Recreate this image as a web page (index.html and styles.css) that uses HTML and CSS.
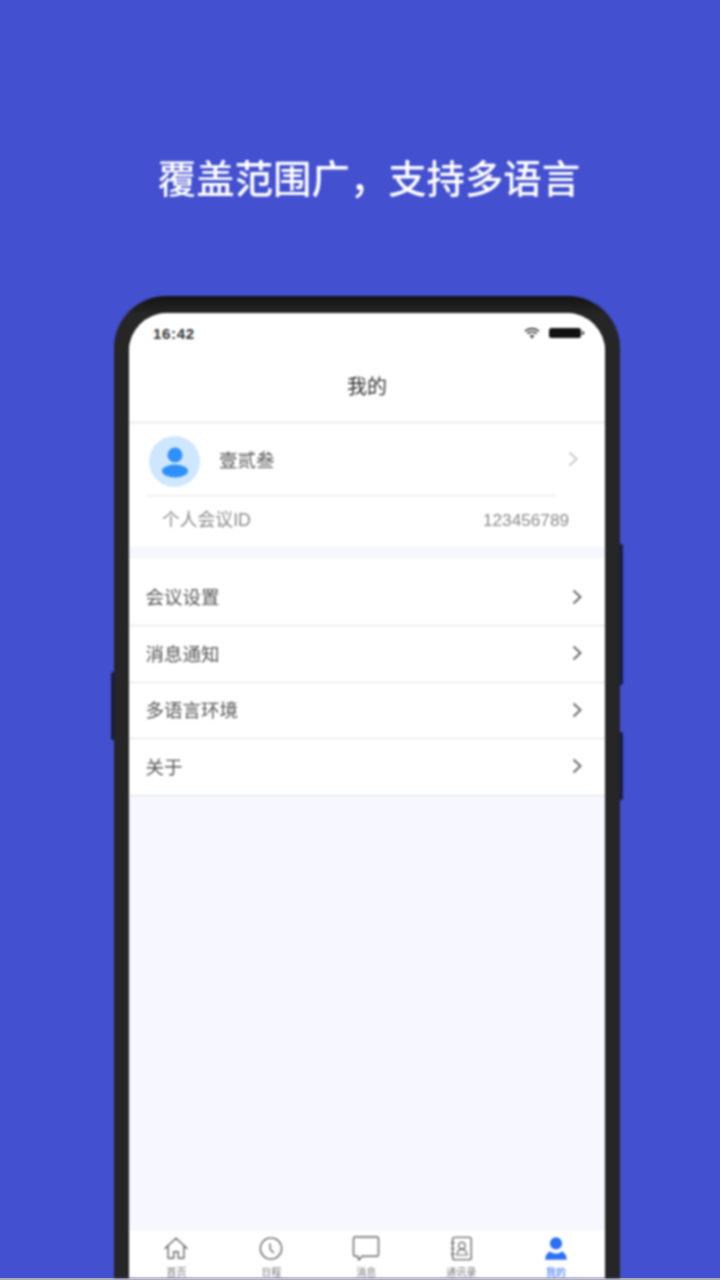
FILE: index.html
```html
<!DOCTYPE html>
<html lang="zh-CN">
<head>
<meta charset="utf-8">
<title>覆盖范围广，支持多语言</title>
<link rel="stylesheet" href="styles.css">
</head>
<body>
<main class="poster">
  <header class="hero"><h1>覆盖范围广，支持多语言</h1></header>
  <div class="phone">
    <span class="btn btn-left"></span>
    <span class="btn btn-right-1"></span>
    <span class="btn btn-right-2"></span>
    <div class="screen">
      <div class="status">
        <span class="time">16:42</span>
        <span class="status-icons">
          <svg class="wifi" viewBox="0 0 16 12" width="16" height="12"><path d="M1 4.200C5 .6 11 .6 15 4.200" fill="none" stroke="#222" stroke-width="1.500"/><path d="M3.400 6.600c2.700-2.300 6.500-2.300 9.200 0" fill="none" stroke="#222" stroke-width="1.500"/><path d="M5.800 8.800c1.300-1 3.100-1 4.400 0L8 11.500z" fill="#222"/></svg>
          <svg class="battery" viewBox="0 0 36 12" width="36" height="12"><rect x="0" y="1" width="32" height="10" rx="2.500" fill="#111"/><rect x="33" y="4" width="2" height="4" rx="1" fill="#333"/></svg>
        </span>
      </div>
      <div class="navbar">我的</div>
      <section class="profile">
        <div class="profile-row">
          <span class="avatar">
            <svg viewBox="0 0 28 32" width="28" height="32"><circle cx="14" cy="9" r="7.500" fill="#2e90fa"/><ellipse cx="14" cy="25" rx="13" ry="6.500" fill="#2e90fa"/></svg>
          </span>
          <span class="name">壹贰叁</span>
          <svg class="chev chev-light" viewBox="0 0 10 16" width="10" height="16"><path d="M1.500 1.500 8.500 8l-7 6.500" fill="none" stroke="#bcbcbc" stroke-width="1.700"/></svg>
        </div>
        <div class="meeting-row">
          <span>个人会议ID</span>
          <span class="meeting-id">123456789</span>
        </div>
      </section>
      <ul class="menu">
        <li class="menu-item first"><span>会议设置</span><svg class="chev" viewBox="0 0 10 16" width="10" height="16"><path d="M1.500 1.500 8.500 8l-7 6.500" fill="none" stroke="#666" stroke-width="1.900"/></svg></li>
        <li class="menu-item"><span>消息通知</span><svg class="chev" viewBox="0 0 10 16" width="10" height="16"><path d="M1.500 1.500 8.500 8l-7 6.500" fill="none" stroke="#666" stroke-width="1.900"/></svg></li>
        <li class="menu-item"><span>多语言环境</span><svg class="chev" viewBox="0 0 10 16" width="10" height="16"><path d="M1.500 1.500 8.500 8l-7 6.500" fill="none" stroke="#666" stroke-width="1.900"/></svg></li>
        <li class="menu-item"><span>关于</span><svg class="chev" viewBox="0 0 10 16" width="10" height="16"><path d="M1.500 1.500 8.500 8l-7 6.500" fill="none" stroke="#666" stroke-width="1.900"/></svg></li>
      </ul>
      <div class="spacer"></div>
      <nav class="tabs">
        <div class="tab">
          <svg viewBox="0 0 28 26" width="26" height="25"><path d="M2 13 14 2l12 11M5.500 11v12.500h6v-7h5v7h6V11" fill="none" stroke="#666" stroke-width="1.500" stroke-linejoin="round" stroke-linecap="round"/></svg>
          <span>首页</span>
        </div>
        <div class="tab">
          <svg viewBox="0 0 28 26" width="26" height="25"><circle cx="14" cy="13" r="11.500" fill="none" stroke="#666" stroke-width="1.500"/><path d="M13 7.500v6l4 4.500" fill="none" stroke="#666" stroke-width="1.500"/></svg>
          <span>日程</span>
        </div>
        <div class="tab">
          <svg viewBox="0 0 28 26" width="28" height="25"><path d="M2.500 1h23A1.500 1.500 0 0 1 27 2.500v17a1.500 1.500 0 0 1-1.500 1.500H10l-3.500 4-1-4h-3A1.500 1.500 0 0 1 1 19.500v-17A1.500 1.500 0 0 1 2.500 1z" fill="none" stroke="#666" stroke-width="1.500" stroke-linejoin="round"/></svg>
          <span>消息</span>
        </div>
        <div class="tab">
          <svg viewBox="0 0 28 26" width="26" height="25"><rect x="5" y="1" width="20" height="24" rx="2" fill="none" stroke="#666" stroke-width="1.500"/><path d="M3 7h4M3 13h4M3 19h4" stroke="#666" stroke-width="1.200"/><circle cx="15" cy="10" r="3.500" fill="none" stroke="#666" stroke-width="1.300"/><path d="M9.500 20c.5-4 2.500-6 5.500-6s5 2 5.500 6z" fill="none" stroke="#666" stroke-width="1.300"/></svg>
          <span>通讯录</span>
        </div>
        <div class="tab active">
          <svg viewBox="0 0 28 26" width="26" height="25"><circle cx="14" cy="7.500" r="6.500" fill="#2b6ff2"/><path d="M2.500 25c0-3 1-6.500 5-9 2 2 4 2.500 6.500 2.500s4.500-.5 6.500-2.500c4 2.500 5 6 5 9z" fill="#2b6ff2"/></svg>
          <span>我的</span>
        </div>
      </nav>
    </div>
  </div>
</main>
</body>
</html>
```
FILE: styles.css
```css
* { box-sizing: border-box; }
html, body { margin: 0; padding: 0; }
body {
  width: 720px;
  height: 1280px;
  overflow: hidden;
  background: #4350d0;
  font-family: "Liberation Sans", "Noto Sans CJK SC", sans-serif;
}
.poster {
  height: 1278px;
  overflow: hidden;
  display: flex;
  flex-direction: column;
  align-items: center;
  filter: blur(0.8px);
}
body::after {
  content: "";
  display: block;
  height: 2px;
  background: #a9abb5;
}
.hero {
  height: 296px;
  flex: none;
  align-self: stretch;
  padding: 155px 0 0 18px;
  text-align: center;
}
.hero h1 {
  margin: 0;
  font-size: 38.400px;
  line-height: 50px;
  font-weight: 500;
  color: #fff;
}
.phone {
  position: relative;
  flex: none;
  width: 506px;
  height: 990px;
  margin-left: 14px;
  background: linear-gradient(#141414, #262626 18px);
  border-radius: 52px 52px 0 0;
  padding: 17px 15px 0;
}
.btn { position: absolute; width: 4px; background: #1b1f3f; }
.btn-left { left: -3px; top: 376px; height: 68px; border-radius: 2px 0 0 2px; }
.btn-right-1 { right: -3px; top: 248px; height: 141px; border-radius: 0 2px 2px 0; }
.btn-right-2 { right: -3px; top: 436px; height: 68px; border-radius: 0 2px 2px 0; }
.screen {
  width: 476px;
  height: 965px;
  background: #f6f7ff;
  border-radius: 38px 38px 0 0;
  overflow: hidden;
  display: flex;
  flex-direction: column;
}
.status {
  height: 40px;
  flex: none;
  background: #fff;
  display: flex;
  justify-content: space-between;
  align-items: center;
  padding: 0 20px 0 24px;
}
.time { font-size: 15px; font-weight: 700; color: #333; letter-spacing: .7px; }
.status-icons { display: flex; align-items: center; gap: 9px; }
.navbar {
  height: 70px;
  flex: none;
  background: #fff;
  border-bottom: 1px solid #dcdcdc;
  display: flex;
  align-items: center;
  justify-content: center;
  font-size: 20px;
  color: #333;
  padding-bottom: 4px;
}
.profile { flex: none; height: 124px; background: #fff; }
.profile-row {
  height: 73px;
  margin: 0 50px 0 18px;
  border-bottom: 1px solid #e4e4e4;
  display: flex;
  align-items: center;
  position: relative;
  padding: 5px 0 0 2px;
}
.avatar {
  width: 51px;
  height: 51px;
  border-radius: 50%;
  background: #cfe6ff;
  display: flex;
  align-items: center;
  justify-content: center;
}
.name { margin: 0 0 6px 19px; font-size: 18.500px; color: #555; }
.chev-light { position: absolute; right: -23px; top: 28px; }
.meeting-row {
  display: flex;
  justify-content: space-between;
  padding: 12px 36px 0 33px;
  font-size: 17.800px;
  line-height: 24px;
  color: #8a8a8a;
}
.meeting-id { font-size: 17.200px; }
.menu { list-style: none; margin: 11px 0 0; padding: 0; flex: none; }
.menu-item {
  height: 56.500px;
  background: #fff;
  border-bottom: 1px solid #e2e2e2;
  display: flex;
  align-items: center;
  justify-content: space-between;
  padding: 0 23px 2px 16.500px;
  font-size: 18.500px;
  color: #555;
}
.menu-item.first { height: 68px; padding-top: 11px; }
.menu-item .chev { margin-top: 1px; }
.spacer { flex: 1; }
.tabs {
  flex: none;
  height: 48px;
  background: #fff;
  display: grid;
  grid-template-columns: repeat(5, 1fr);
  padding-right: 1.500px;
  overflow: hidden;
}
.tab {
  display: flex;
  flex-direction: column;
  align-items: center;
  padding-top: 6px;
  font-size: 10px;
  line-height: 12px;
  color: #777;
}
.tab svg { display: block; margin-bottom: 6px; }
.tab.active { color: #2b6ff2; }
```
